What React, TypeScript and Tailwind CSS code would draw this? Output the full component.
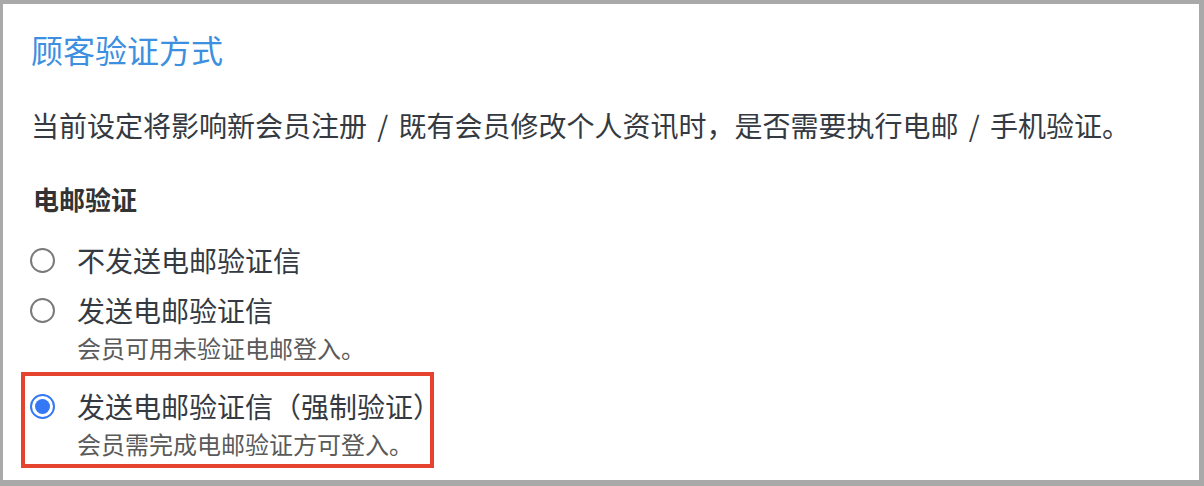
import React, { useState } from 'react';

type Option = {
  id: string;
  label: string;
  hint?: string;
};

const options: Option[] = [
  { id: 'none', label: '不发送电邮验证信' },
  { id: 'send', label: '发送电邮验证信', hint: '会员可用未验证电邮登入。' },
  { id: 'force', label: '发送电邮验证信（强制验证）', hint: '会员需完成电邮验证方可登入。' },
];

const Radio: React.FC<{ checked: boolean }> = ({ checked }) =>
  checked ? (
    <span className="flex h-[25px] w-[25px] shrink-0 items-center justify-center rounded-full border-2 border-[#3478f6] bg-white">
      <span className="h-[15px] w-[15px] rounded-full bg-[#3478f6]" />
    </span>
  ) : (
    <span className="h-[25px] w-[25px] shrink-0 rounded-full border-2 border-[#7a7a7a] bg-white" />
  );

const App: React.FC = () => {
  const [selected, setSelected] = useState('force');

  return (
    <div
      className="h-[486px] w-full bg-[#a9a9a9] pt-[4px] pl-[3px] pr-[5px] pb-[6px]"
      style={{ fontFamily: '"Noto Sans CJK SC", "Noto Sans", sans-serif' }}
    >
      <div className="h-full bg-white px-[27px] pt-[25px]">
        <h2 className="pl-[1px] text-[32px] leading-[40px] text-[#3d8fe0]">顾客验证方式</h2>

        <p className="mt-[36px] pl-[1px] text-[28px] leading-[40px] text-[#353a42]">
          当前设定将影响新会员注册<span className="mx-[4px]"> / </span>既有会员修改个人资讯时，是否需要执行电邮
          <span className="mx-[4px]"> / </span>手机验证。
        </p>

        <h3 className="mt-[36px] pl-[3px] text-[26px] font-bold leading-[36px] text-[#333]">电邮验证</h3>

        <div className="mt-[23px] flex flex-col">
          {options.map((opt) => {
            const isForce = opt.id === 'force';
            return (
              <label
                key={opt.id}
                onClick={() => setSelected(opt.id)}
                className={
                  isForce
                    ? 'mt-[6px] -ml-[9px] w-[413px] cursor-pointer border-4 border-[#e5432d] pt-[10px] pb-[2px] pl-[5px]'
                    : 'mt-[10px] cursor-pointer first:mt-0'
                }
              >
                <div className="flex h-[40px] items-center gap-[22px]">
                  <Radio checked={selected === opt.id} />
                  <span className="text-[28px] leading-[40px] text-[#353a42]">{opt.label}</span>
                </div>
                {opt.hint && (
                  <div className="pl-[47px] text-[24px] leading-[36px] text-[#5a5a5a]">{opt.hint}</div>
                )}
              </label>
            );
          })}
        </div>
      </div>
    </div>
  );
};

export default App;
